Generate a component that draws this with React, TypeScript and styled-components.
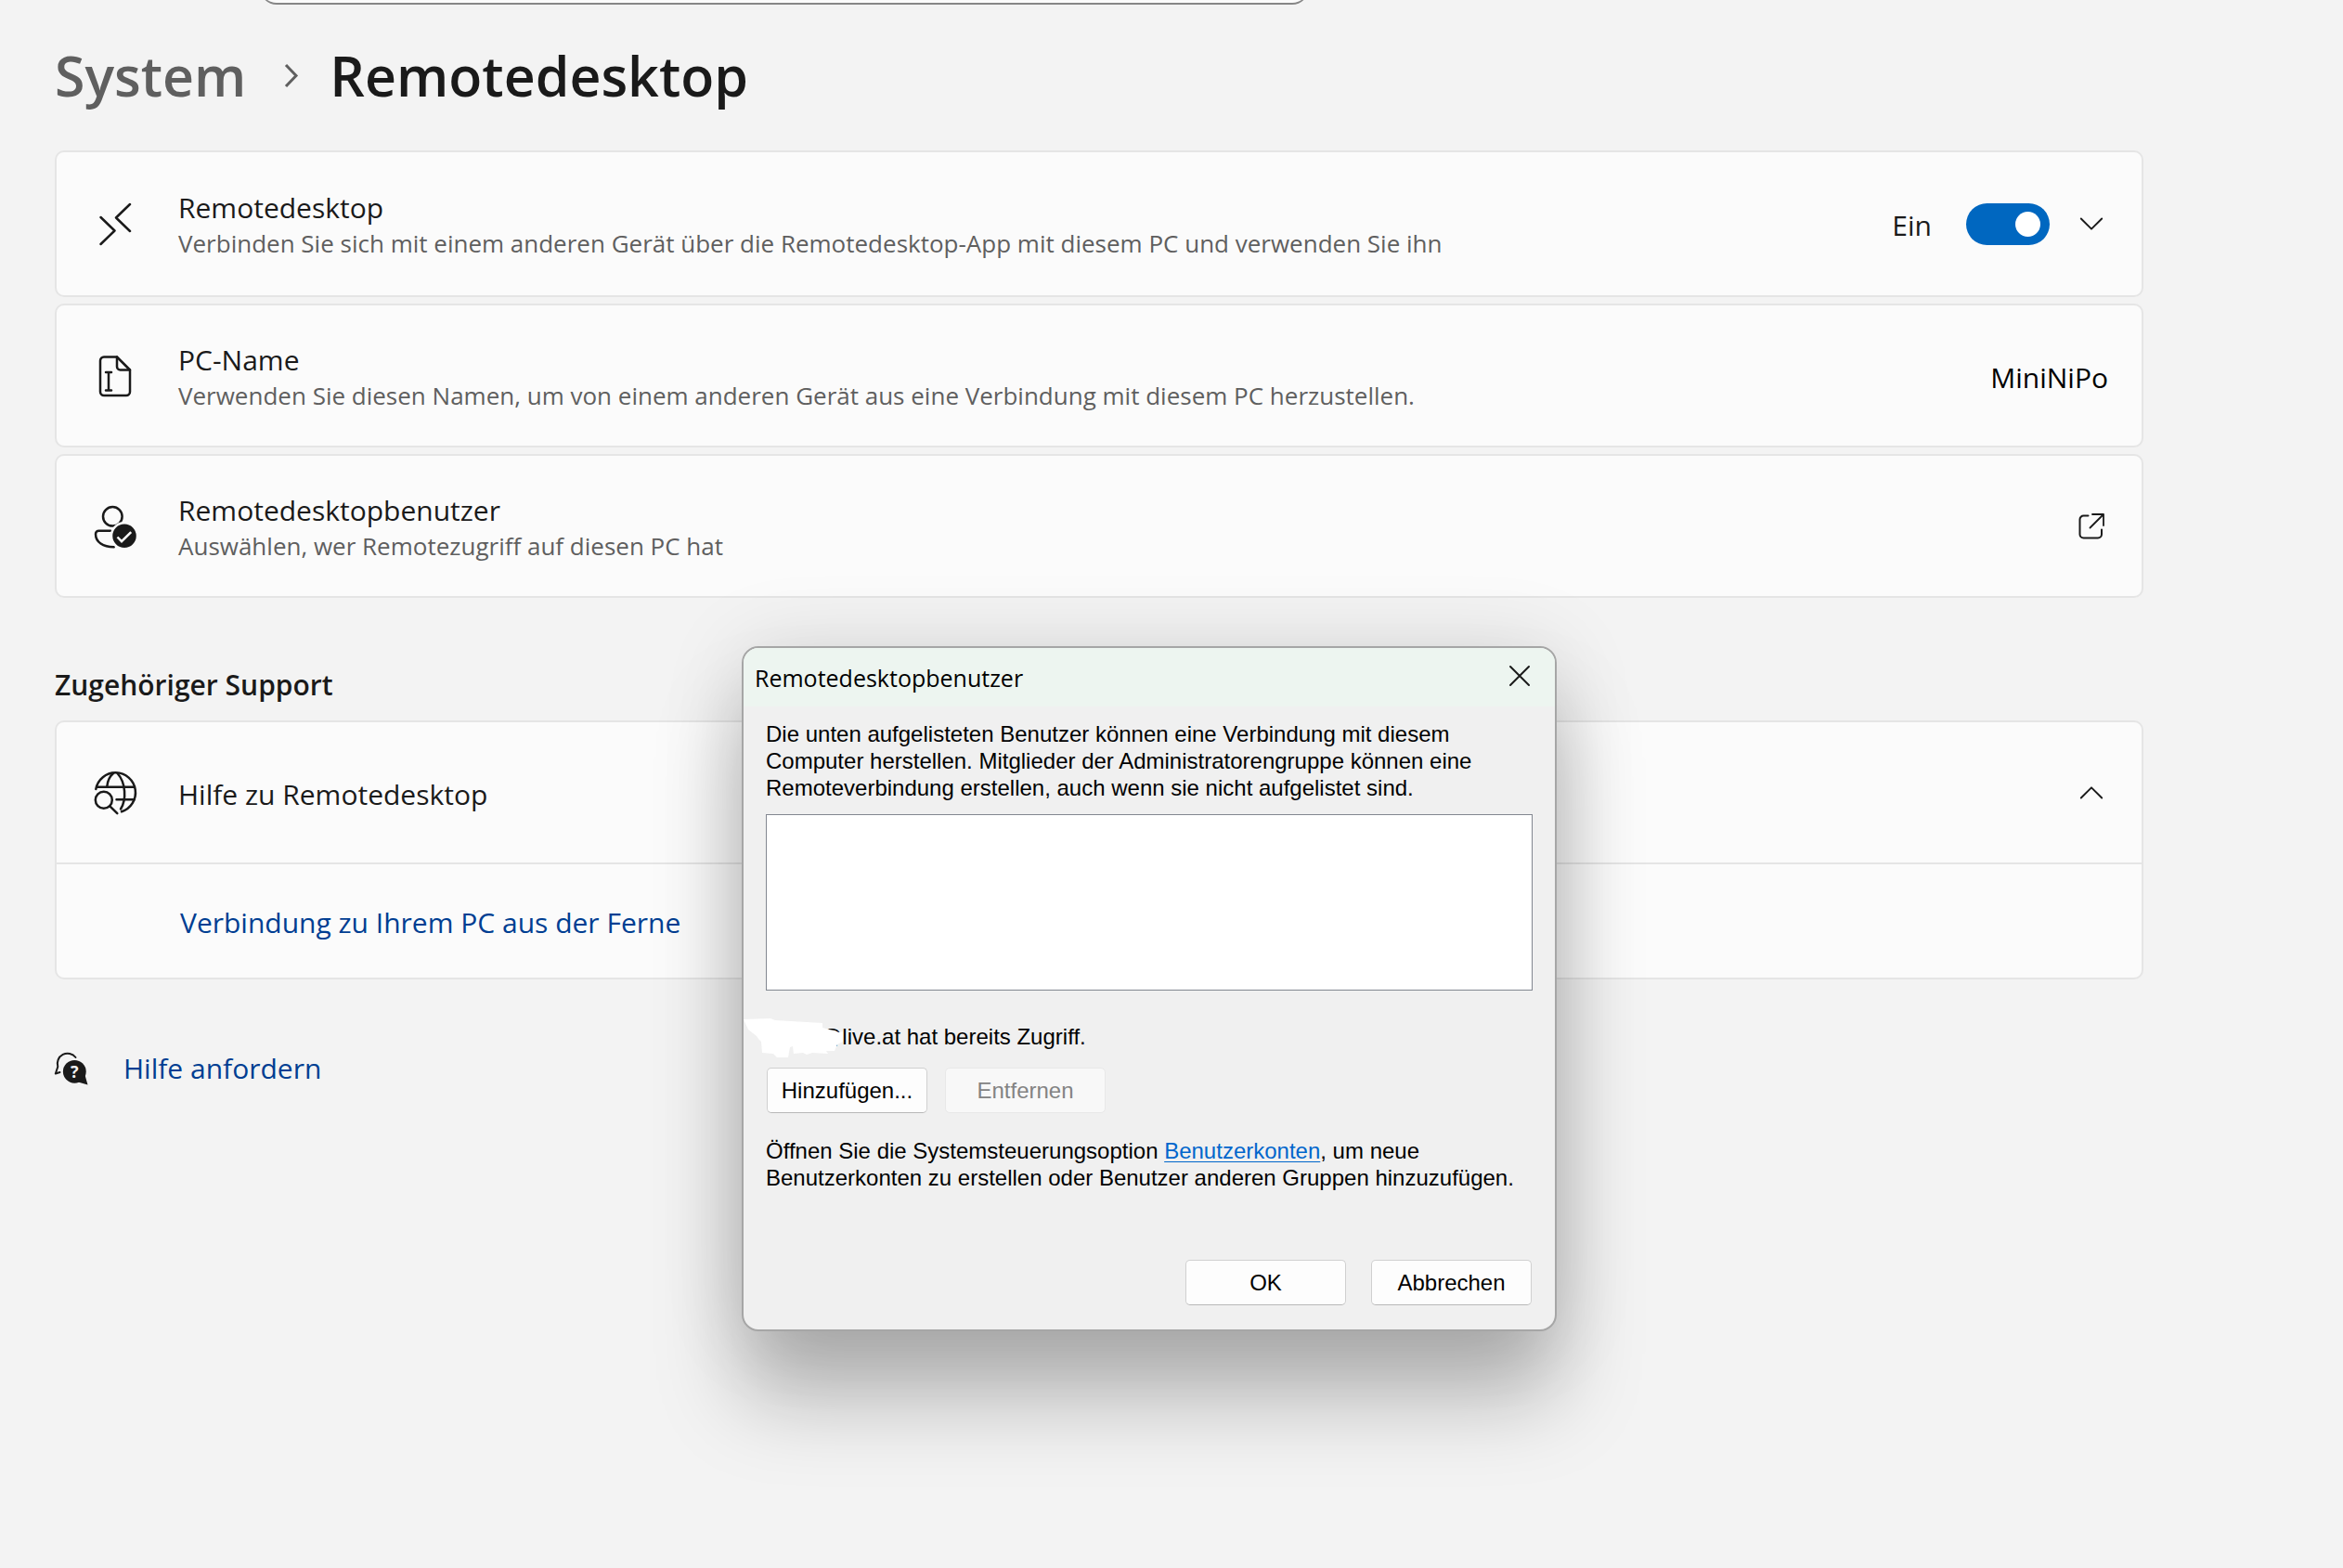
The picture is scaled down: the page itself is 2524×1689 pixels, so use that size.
import React, { useState } from "react";
import styled, { createGlobalStyle } from "styled-components";

const UI = '"Open Sans", "Noto Sans", sans-serif';
const CLASSIC = '"Liberation Sans", Arial, sans-serif';
const INK = "#1a1a1a";

const GlobalStyle = createGlobalStyle`
  * { box-sizing: border-box; }
  body { margin: 0; background: #f3f3f3; color: ${INK}; font-family: ${UI}; }
  h1, h2, p { margin: 0; font-weight: 400; }
`;

const Page = styled.div`
  position: relative;
  min-height: 100vh;
  overflow: hidden;
`;

const TopBar = styled.div`
  display: flex;
  height: 5px;
  padding-left: 280px;
  align-items: flex-end;
`;

const SearchBox = styled.input`
  width: 1130px;
  height: 54px;
  border: 1px solid #e5e5e5;
  border-bottom: 2px solid #868686;
  border-radius: 18px;
  background: #fbfbfb;
`;

const Content = styled.main`
  display: flex;
  flex-direction: column;
  padding: 30px 215px 0 59px;
`;

const Breadcrumb = styled.nav`
  display: flex;
  align-items: center;
  gap: 35px;
  height: 92px;
  font-size: 59px;
  line-height: 92px;
  font-weight: 600;
`;

const Crumb = styled.a`
  color: #5f5f5f;
  text-decoration: none;
`;

const CrumbArrow = styled.svg`
  width: 20px;
  height: 24px;
  overflow: visible;
`;

const CurrentPage = styled.h1`
  font-size: 59px;
  font-weight: 600;
`;

const CardList = styled.section`
  display: flex;
  flex-direction: column;
  gap: 7px;
  margin-top: 35px;
`;

const Card = styled.div`
  border: 2px solid #e5e5e5;
  border-radius: 10px;
  background: #fbfbfb;
`;

const CardRow = styled.div<{ $tall?: boolean }>`
  display: flex;
  align-items: center;
  height: ${(p) => (p.$tall ? 154 : 151)}px;
  padding: 0 36px 0 41px;
`;

const Glyph = styled.svg<{ $size: number }>`
  flex: none;
  width: ${(p) => p.$size}px;
  height: ${(p) => p.$size}px;
  overflow: visible;
  fill: none;
  stroke: ${INK};
  stroke-width: 2.5;
  stroke-linecap: round;
  stroke-linejoin: round;
`;

const Labels = styled.div`
  flex: 1;
  margin-left: 45px;
  padding-top: 4px;
`;

const Label = styled.p`
  font-size: 30px;
  line-height: 38px;
`;

const Hint = styled.p`
  font-size: 26px;
  line-height: 38px;
  color: #5f5f5f;
`;

const State = styled.label`
  margin-right: 37px;
  padding-top: 4px;
  font-size: 30px;
  line-height: 38px;
`;

const Toggle = styled.input`
  appearance: none;
  display: flex;
  align-items: center;
  width: 90px;
  height: 45px;
  margin: 0 31px 0 0;
  padding: 0 10px;
  border-radius: 23px;
  background: #0067c0;
  &::before {
    content: "";
    width: 27px;
    height: 27px;
    margin-left: auto;
    border-radius: 50%;
    background: #fff;
  }
  &:not(:checked) { background: #8a8a8a; }
  &:not(:checked)::before { margin-left: 0; }
`;

const IconButton = styled.button`
  display: flex;
  align-items: center;
  justify-content: center;
  width: 28px;
  height: 45px;
  margin-right: 4px;
  padding: 0;
  border: 0;
  background: none;
`;

const PcName = styled.p`
  padding-top: 4px;
  color: #000;
  font-size: 30px;
  line-height: 38px;
`;

const SectionTitle = styled.h2`
  margin-top: 74px;
  padding-bottom: 18px;
  font-size: 30px;
  line-height: 40px;
  font-weight: 600;
`;

const SubRow = styled.div`
  display: flex;
  align-items: center;
  height: 124px;
  padding: 4px 0 0 133px;
  border-top: 2px solid #e5e5e5;
`;

const Link = styled.a`
  color: #003e92;
  font-size: 30px;
  line-height: 38px;
  text-decoration: none;
`;

const HelpRow = styled.div`
  display: flex;
  align-items: center;
  gap: 38px;
  margin-top: 77px;
`;

/* Floating classic dialog */
const Dialog = styled.section`
  position: absolute;
  left: 799px;
  top: 696px;
  width: 878px;
  border: 2px solid #a6a6a6;
  border-radius: 18px;
  background: #f0f0f0;
  color: #000;
  font-family: ${CLASSIC};
  font-size: 24px;
  line-height: 29px;
  box-shadow: 0 72px 92px rgba(0, 0, 0, 0.26), 0 4px 90px rgba(0, 0, 0, 0.12);
`;

const TitleBar = styled.header`
  display: flex;
  align-items: center;
  justify-content: space-between;
  height: 63px;
  padding: 0 27px 0 12px;
  border-radius: 16px 16px 0 0;
  background: #edf5f0;
`;

const DialogTitle = styled.h2`
  font-family: ${UI};
  font-size: 25px;
  line-height: 36px;
`;

const CloseButton = styled.button`
  display: flex;
  padding: 0 0 4px;
  border: 0;
  background: none;
`;

const DialogBody = styled.div`
  display: flex;
  flex-direction: column;
  padding: 15px 24px 26px;
`;

const UserList = styled.select`
  width: 100%;
  height: 190px;
  margin-top: 14px;
  border: 1px solid #828790;
  border-radius: 0;
  background: #fff;
`;

const Access = styled.p`
  position: relative;
  margin-top: 35px;
  padding-left: 58px;
`;

const Scribble = styled.svg`
  position: absolute;
  left: -24px;
  top: -6px;
  width: 110px;
  height: 46px;
`;

const Buttons = styled.div<{ $end?: boolean }>`
  display: flex;
  justify-content: ${(p) => (p.$end ? "flex-end" : "flex-start")};
  gap: ${(p) => (p.$end ? 27 : 19)}px;
  margin-top: ${(p) => (p.$end ? 74 : 19)}px;
  padding: 0 1px;
`;

const PushButton = styled.button`
  width: 173px;
  height: 49px;
  padding: 0;
  border: 1px solid #d0d0d0;
  border-bottom-color: #b8b8b8;
  border-radius: 5px;
  background: #fdfdfd;
  color: #000;
  font-family: ${CLASSIC};
  font-size: 24px;
  line-height: 29px;
  &:disabled {
    border-color: #e8e8e8;
    background: #f8f8f8;
    color: #838383;
  }
`;

const Advice = styled.p`
  margin-top: 26px;
`;

const AccountsLink = styled.a`
  color: #0066cc;
  text-decoration: underline;
  text-decoration-thickness: 1px;
  text-underline-offset: 3px;
`;

const RemoteIcon = () => (
  <Glyph $size={45} viewBox="0 0 45 45" aria-hidden>
    <path d="M6.5 15 21.5 29.5 6.5 44M38 1 23 15.5 38 30" />
  </Glyph>
);

const RenameIcon = () => (
  <Glyph $size={45} viewBox="0 0 45 45" aria-hidden>
    <path d="M10 2.5H24L38 16.5V40a4 4 0 0 1-4 4H10a4 4 0 0 1-4-4V6.5a4 4 0 0 1 4-4Z" />
    <path d="M24 2.5V13a3.5 3.5 0 0 0 3.5 3.5H38M12 19h6M12 38.500h6M15 19v19.5" />
  </Glyph>
);

const UserCheckIcon = () => (
  <Glyph $size={45} viewBox="0 0 45 45" aria-hidden>
    <circle cx="19.3" cy="12.3" r="10.3" />
    <path d="M17 27.7H4.5A3.5 3.5 0 0 0 1 31.2C1 40 9 45 20.7 45.2" />
    <circle cx="32" cy="33.3" r="14" fill={INK} stroke="#fbfbfb" />
    <path d="M24.5 34.5 29 39.2 39.2 29.2" stroke="#fbfbfb" strokeLinecap="butt" strokeLinejoin="miter" />
  </Glyph>
);

const GlobeIcon = () => (
  <Glyph $size={45} viewBox="0 0 45 45" aria-hidden>
    <path d="M1.3 19A21.5 21.5 0 1 1 29 43.3" />
    <path d="M3 16.700H42.5M23.5 30.3H42.5" />
    <path d="M20 2C16 5.5 13.8 11 13.3 16M24.5 2C33.5 12 34.5 30 28 40.5" />
    <circle cx="9.8" cy="30.7" r="9" />
    <path d="M16.3 37.3 24.3 45.2" />
  </Glyph>
);

const HelpIcon = () => (
  <Glyph $size={36} viewBox="0 0 36 36" aria-hidden>
    <path d="M22.5 6A11 11 0 0 0 3.3 16L.8 23.5 5.5 22" strokeWidth="2" />
    <circle cx="21.3" cy="21.3" r="12.4" fill={INK} stroke="none" />
    <path d="M32.5 25 35.5 35.5 25 32.5Z" fill={INK} stroke="none" />
    <text x="21.3" y="28" textAnchor="middle" fill="#f3f3f3" stroke="none" fontSize="18" fontWeight="700" fontFamily={UI}>
      ?
    </text>
  </Glyph>
);

const OpenIcon = () => (
  <Glyph $size={28} viewBox="0 0 28 28" aria-hidden>
    <path d="M10.5 2.5H5.5a4 4 0 0 0-4 4V22.5a4 4 0 0 0 4 4H21a4 4 0 0 0 4-4V17.5" strokeWidth="2" />
    <path d="M15 1H27V13M27 1 12.5 15.5" strokeWidth="1.8" />
  </Glyph>
);

const Chevron = ({ up }: { up?: boolean }) => (
  <Glyph $size={24} viewBox="0 0 24 24" aria-hidden>
    <path d={up ? "M.8 17.5 12 6.3 23.2 17.5" : "M.8 6.5 12 17.7 23.2 6.5"} strokeWidth="1.9" />
  </Glyph>
);

export default function App() {
  const [on, setOn] = useState(true);
  return (
    <>
      <GlobalStyle />
      <Page>
        <TopBar>
          <SearchBox type="search" aria-label="Suche" />
        </TopBar>
        <Content>
          <Breadcrumb>
            <Crumb href="#system">System</Crumb>
            <CrumbArrow viewBox="0 0 20 24" aria-hidden>
              <path d="M8 1 19 12.5 8 24" fill="none" stroke="#5f5f5f" strokeWidth="3" />
            </CrumbArrow>
            <CurrentPage>Remotedesktop</CurrentPage>
          </Breadcrumb>

          <CardList>
            <Card>
              <CardRow $tall>
                <RemoteIcon />
                <Labels>
                  <Label>Remotedesktop</Label>
                  <Hint>Verbinden Sie sich mit einem anderen Gerät über die Remotedesktop-App mit diesem PC und verwenden Sie ihn</Hint>
                </Labels>
                <State htmlFor="remote">Ein</State>
                <Toggle id="remote" type="checkbox" role="switch" checked={on} onChange={(e) => setOn(e.target.checked)} />
                <IconButton aria-label="Erweitern">
                  <Chevron />
                </IconButton>
              </CardRow>
            </Card>
            <Card>
              <CardRow>
                <RenameIcon />
                <Labels>
                  <Label>PC-Name</Label>
                  <Hint>Verwenden Sie diesen Namen, um von einem anderen Gerät aus eine Verbindung mit diesem PC herzustellen.</Hint>
                </Labels>
                <PcName>MiniNiPo</PcName>
              </CardRow>
            </Card>
            <Card>
              <CardRow>
                <UserCheckIcon />
                <Labels>
                  <Label>Remotedesktopbenutzer</Label>
                  <Hint>Auswählen, wer Remotezugriff auf diesen PC hat</Hint>
                </Labels>
                <IconButton aria-label="Öffnen">
                  <OpenIcon />
                </IconButton>
              </CardRow>
            </Card>
          </CardList>

          <SectionTitle>Zugehöriger Support</SectionTitle>
          <Card>
            <CardRow>
              <GlobeIcon />
              <Labels>
                <Label>Hilfe zu Remotedesktop</Label>
              </Labels>
              <IconButton aria-label="Reduzieren">
                <Chevron up />
              </IconButton>
            </CardRow>
            <SubRow>
              <Link href="#verbindung">Verbindung zu Ihrem PC aus der Ferne</Link>
            </SubRow>
          </Card>

          <HelpRow>
            <HelpIcon />
            <Link href="#hilfe">Hilfe anfordern</Link>
          </HelpRow>
        </Content>

        <Dialog role="dialog" aria-labelledby="dialog-title">
          <TitleBar>
            <DialogTitle id="dialog-title">Remotedesktopbenutzer</DialogTitle>
            <CloseButton aria-label="Schließen">
              <Glyph $size={22} viewBox="0 0 22 22" aria-hidden>
                <path d="M1 1 21 21M21 1 1 21" strokeWidth="2" />
              </Glyph>
            </CloseButton>
          </TitleBar>
          <DialogBody>
            <p>
              Die unten aufgelisteten Benutzer können eine Verbindung mit diesem Computer herstellen. Mitglieder der
              Administratorengruppe können eine Remoteverbindung erstellen, auch wenn sie nicht aufgelistet sind.
            </p>
            <UserList size={6} aria-label="Benutzer" />
            <Access>
              @live.at hat bereits Zugriff.
              <Scribble viewBox="0 0 110 46" aria-hidden>
                <path
                  fill="#fff"
                  d="M0 2 29 1 34 3 68 5 85 6V11L96 14 103 16 107 15V26L101 29 98 36 89 36 91 39 74 38 68 40 64 38 54 39 53 31 50 32 48 43 36 43 32 39 20 38 19 26 16 23 14 20 5 13Z"
                />
              </Scribble>
            </Access>
            <Buttons>
              <PushButton>Hinzufügen...</PushButton>
              <PushButton disabled>Entfernen</PushButton>
            </Buttons>
            <Advice>
              Öffnen Sie die Systemsteuerungsoption <AccountsLink href="#konten">Benutzerkonten</AccountsLink>, um neue
              <br />
              Benutzerkonten zu erstellen oder Benutzer anderen Gruppen hinzuzufügen.
            </Advice>
            <Buttons $end>
              <PushButton>OK</PushButton>
              <PushButton>Abbrechen</PushButton>
            </Buttons>
          </DialogBody>
        </Dialog>
      </Page>
    </>
  );
}
